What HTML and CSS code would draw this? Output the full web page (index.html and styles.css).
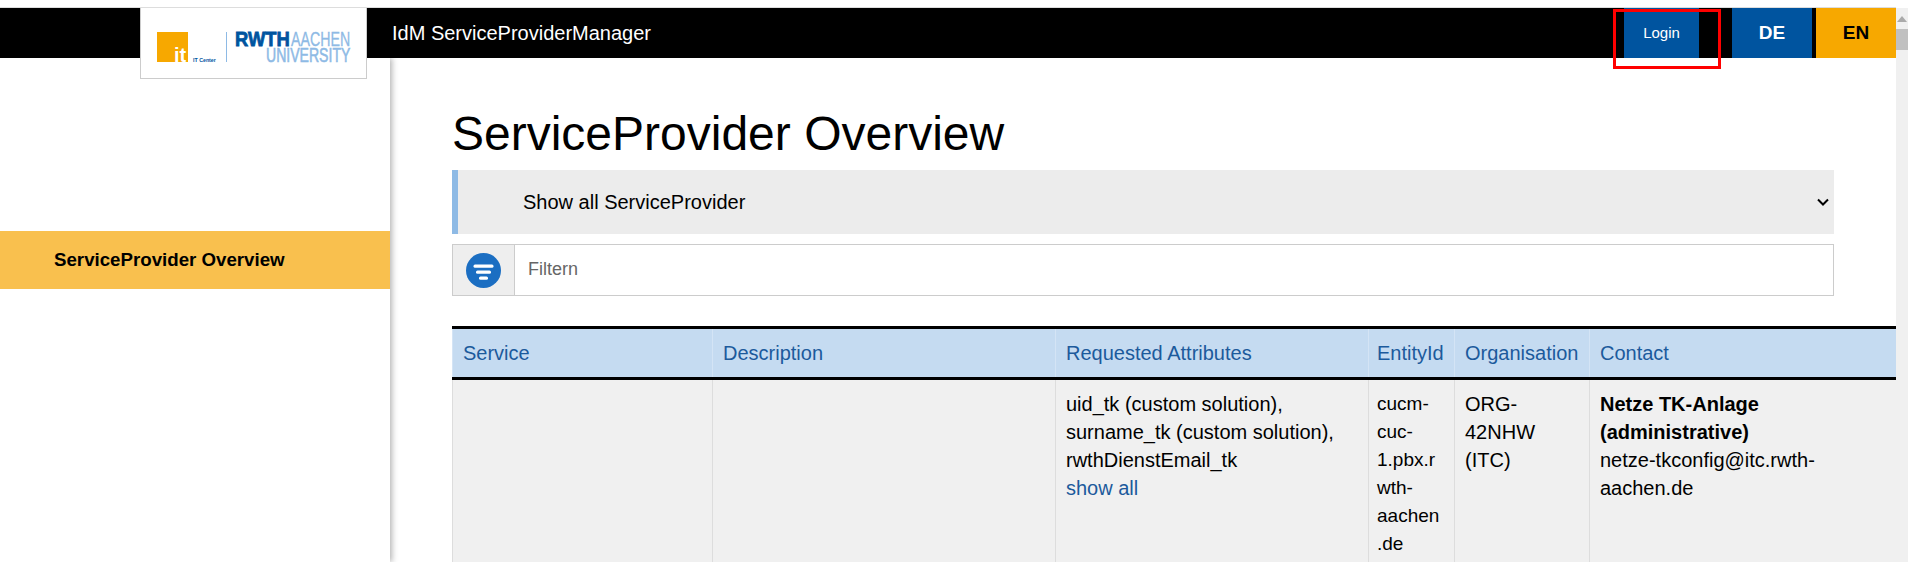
FILE: index.html
```html
<!DOCTYPE html>
<html lang="en">
<head>
    <meta charset="UTF-8">
    <title>IdM ServiceProviderManager</title>
    <link rel="stylesheet" href="styles.css">
</head>
<body>
    <div class="page">
        <div class="window">
            <header class="topbar">
                <div class="logo">
                    <svg width="225" height="70" viewBox="0 0 225 70">
                        <rect x="16" y="24" width="31" height="30" fill="#f7a800"/>
                        <text x="33" y="54" class="logo-it" fill="#fff">it</text>
                        <text transform="translate(52 54) scale(0.88 1)" class="logo-center" fill="#00549f">IT Center</text>
                        <rect x="85" y="24" width="1" height="30" fill="#8ebae5"/>
                        <text transform="translate(94 38) scale(0.92 1)" class="logo-rwth" fill="#00549f">RWTH</text>
                        <text transform="translate(150 38) scale(0.71 1)" class="logo-aachen" fill="#8ebae5">AACHEN</text>
                        <text transform="translate(125 54) scale(0.67 1)" class="logo-univ" fill="#8ebae5">UNIVERSITY</text>
                    </svg>
                </div>
                <div class="app-title">IdM ServiceProviderManager</div>
                <nav class="top-actions">
                    <a class="login" href="#">Login</a>
                    <a class="lang lang-de" href="#">DE</a>
                    <a class="lang lang-en" href="#">EN</a>
                </nav>
                <div class="red-mark"></div>
            </header>

            <div class="columns">
                <aside class="sidebar">
                    <a class="side-item" href="#">ServiceProvider Overview</a>
                </aside>

                <main class="content">
                    <h1>ServiceProvider Overview</h1>
                    <div class="select-box">
                        <span>Show all ServiceProvider</span>
                        <svg width="12" height="8" viewBox="0 0 12 8">
                            <path d="M1 1.5l5 5 5-5" fill="none" stroke="#000" stroke-width="2"/>
                        </svg>
                    </div>
                    <div class="filter">
                        <div class="filter-addon">
                            <svg width="35" height="35" viewBox="0 0 35 35">
                                <circle cx="17.5" cy="17.5" r="17.5" fill="#1b6ec2"/>
                                <rect x="7.5" y="11.5" width="20" height="3.2" rx="1.5" fill="#fff"/>
                                <rect x="10" y="17.5" width="15" height="3.2" rx="1.5" fill="#fff"/>
                                <rect x="13" y="23.5" width="9" height="3.2" rx="1.5" fill="#fff"/>
                            </svg>
                        </div>
                        <div class="filter-input">Filtern</div>
                    </div>

                    <table class="sp-table">
                        <colgroup>
                            <col class="col-service">
                            <col class="col-desc">
                            <col class="col-attr">
                            <col class="col-entity">
                            <col class="col-org">
                            <col class="col-contact">
                        </colgroup>
                        <thead>
                            <tr>
                                <th>Service</th>
                                <th>Description</th>
                                <th>Requested Attributes</th>
                                <th class="entity">EntityId</th>
                                <th>Organisation</th>
                                <th>Contact</th>
                            </tr>
                        </thead>
                        <tbody>
                            <tr>
                                <td></td>
                                <td></td>
                                <td>uid_tk (custom solution), surname_tk (custom solution), rwthDienstEmail_tk<br><a href="#">show all</a></td>
                                <td class="entity">cucm-cuc-1.pbx.rwth-aachen.de</td>
                                <td>ORG-42NHW (ITC)</td>
                                <td><b>Netze TK-Anlage (administrative)</b><br>netze-tkconfig@itc.rwth-aachen.de</td>
                            </tr>
                        </tbody>
                    </table>
                </main>
            </div>
        </div>

        <div class="scrollbar">
            <div class="scroll-arrow"></div>
            <div class="scroll-thumb"></div>
        </div>
    </div>
</body>
</html>
```

FILE: styles.css
```css
html, body {
    margin: 0;
    height: 562px;
    overflow: hidden;
    background: #fff;
}
body {
    font-family: "Liberation Sans", Arial, sans-serif;
    font-size: 20px;
    line-height: 28px;
    color: #000;
}
a {
    text-decoration: none;
}
.page {
    display: flex;
    height: 562px;
    padding-top: 7px;
    box-sizing: border-box;
}
.window {
    flex: 1;
    min-width: 0;
    border-top: 1px solid #ddd;
}
.topbar {
    position: relative;
    display: flex;
    align-items: center;
    height: 50px;
    background: #000;
}
.logo {
    position: absolute;
    top: 0;
    left: 140px;
    width: 225px;
    height: 70px;
    background: #fff;
    border: 1px solid #ccc;
    border-top: 0;
    z-index: 2;
}
.logo svg {
    display: block;
}
.logo-it {
    font: bold 20px "Liberation Sans", sans-serif;
}
.logo-center {
    font: bold 6px "Liberation Sans", sans-serif;
}
.logo-rwth {
    font: bold 20px "Liberation Sans", sans-serif;
    stroke: #00549f;
    stroke-width: 0.8px;
}
.logo-aachen {
    font: 20px "Liberation Sans", sans-serif;
    stroke: #8ebae5;
    stroke-width: 0.3px;
}
.logo-univ {
    font: 21px "Liberation Sans", sans-serif;
    stroke: #8ebae5;
    stroke-width: 0.6px;
}
.app-title {
    margin-left: 392px;
    font-size: 20px;
    color: #fff;
}
.top-actions {
    display: flex;
    height: 50px;
    margin-left: auto;
}
.login {
    display: flex;
    align-items: center;
    justify-content: center;
    width: 75px;
    margin-right: 33px;
    background: #00549f;
    color: #fff;
    font-size: 15px;
}
.lang {
    display: flex;
    align-items: center;
    justify-content: center;
    width: 80px;
    font-size: 19px;
    font-weight: bold;
}
.lang-de {
    background: #00549f;
    color: #fff;
    margin-right: 4px;
}
.lang-en {
    background: #f7a800;
    color: #000;
}
.red-mark {
    position: absolute;
    top: 1px;
    left: 1613px;
    width: 102px;
    height: 54px;
    border: 3px solid #f00;
    z-index: 3;
}
.columns {
    display: flex;
    height: 504px;
    overflow: hidden;
}
.sidebar {
    flex: 0 0 390px;
    padding-top: 173px;
    box-shadow: 2px 0 6px rgba(0, 0, 0, 0.3);
    box-sizing: border-box;
}
.side-item {
    display: block;
    height: 58px;
    padding-left: 54px;
    background: #f9c04e;
    color: #000;
    font-size: 18.7px;
    font-weight: bold;
    line-height: 57px;
}
.content {
    flex: 1;
    min-width: 0;
    padding-left: 62px;
}
h1 {
    margin: 48px 0 0;
    font-size: 48px;
    font-weight: normal;
    line-height: 56px;
}
.select-box {
    display: flex;
    align-items: center;
    justify-content: space-between;
    height: 64px;
    margin: 8px 62px 0 0;
    padding: 0 5px 0 65px;
    background: #ececec;
    border-left: 6px solid #8ebae5;
}
.filter {
    display: flex;
    height: 52px;
    margin: 10px 62px 0 0;
    border: 1px solid #ccc;
    box-sizing: border-box;
}
.filter-addon {
    display: flex;
    align-items: center;
    justify-content: center;
    width: 61px;
    background: #eee;
    border-right: 1px solid #ccc;
}
.filter-input {
    flex: 1;
    padding-left: 13px;
    color: #666;
    font-size: 18px;
    line-height: 48px;
}
.sp-table {
    width: 1444px;
    margin-top: 30px;
    border-collapse: collapse;
    table-layout: fixed;
    border-top: 3px solid #000;
}
.col-service { width: 260px; }
.col-desc { width: 343px; }
.col-attr { width: 313px; }
.col-entity { width: 86px; }
.col-org { width: 135px; }
.col-contact { width: 307px; }
.sp-table th {
    height: 48px;
    padding: 0 10px;
    background: #c5dbf1;
    border-left: 1px solid #d4e4f5;
    border-bottom: 3px solid #000;
    color: #1c5a9c;
    font-weight: normal;
    text-align: left;
}
.sp-table th.entity {
    padding: 0 8px;
}
.sp-table td {
    padding: 10px 10px;
    background: #f0f0f0;
    border-left: 1px solid #ddd;
    vertical-align: top;
    overflow-wrap: break-word;
}
.sp-table td.entity {
    padding: 10px 11px 10px 8px;
    font-size: 19px;
}
.sp-table td a {
    color: #1c5a9c;
}
.scrollbar {
    flex: 0 0 12px;
    margin-top: 1px;
    background: #f0f0f0;
}
.scroll-arrow {
    width: 0;
    height: 0;
    margin: 8px 1px 0 1px;
    border-left: 5px solid transparent;
    border-right: 5px solid transparent;
    border-bottom: 6px solid #aaa;
}
.scroll-thumb {
    height: 21px;
    margin-top: 7px;
    background: #c0c0c0;
}
```
